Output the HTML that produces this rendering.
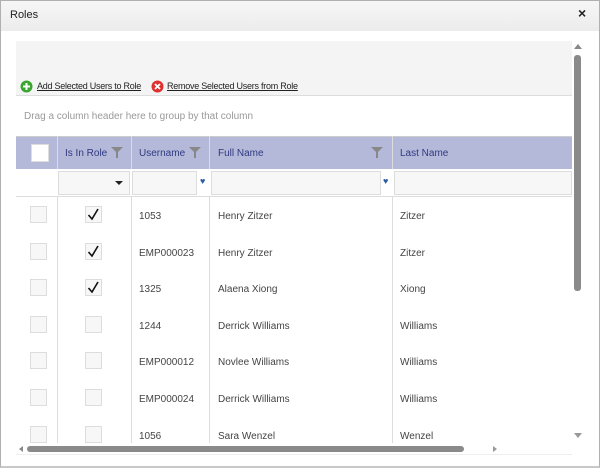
<!DOCTYPE html>
<html><head><style>
*{margin:0;padding:0;box-sizing:border-box}
body{width:600px;height:468px;overflow:hidden;background:#fff;font-family:"Liberation Sans",sans-serif;position:relative}
.a{position:absolute}
.cb{position:absolute;width:17px;height:17px;border:1px solid #ddd;background:#f7f7f7}
.t{position:absolute;font-size:10px;color:#444}
.vl{position:absolute;width:1px;background:#ddd}
</style></head><body>
<div class="a" style="left:0;top:0;width:600px;height:468px;border:1px solid #b0b0b0;border-bottom:2px solid #c8c8c8"></div>
<div class="a" style="left:1px;top:1px;width:598px;height:30px;background:linear-gradient(#f6f6f6,#ececec)"></div>
<div class="t" style="left:10px;top:9px;font-size:11px;color:#222">Roles</div>
<div class="a" style="left:578px;top:5px;font-size:14px;font-weight:bold;color:#222">×</div>

<div class="a" style="left:16px;top:41px;width:556px;height:55px;background:#f4f4f4;border-bottom:1px solid #ddd"></div>
<svg class="a" style="left:20px;top:80px" width="13" height="13"><circle cx="6.5" cy="6.5" r="6" fill="#3aa52f"/><path d="M6.5 3v7M3 6.5h7" stroke="#fff" stroke-width="2"/></svg>
<div class="t" style="left:37px;top:81px;font-size:9px;letter-spacing:-0.25px;text-decoration:underline;color:#222">Add Selected Users to Role</div>
<svg class="a" style="left:151px;top:80px" width="13" height="13"><circle cx="6.5" cy="6.5" r="6" fill="#e03030"/><path d="M4 4l5 5M9 4l-5 5" stroke="#fff" stroke-width="1.8"/></svg>
<div class="t" style="left:167px;top:81px;font-size:9px;letter-spacing:-0.25px;text-decoration:underline;color:#222">Remove Selected Users from Role</div>
<div class="t" style="left:24px;top:111px;color:#999">Drag a column header here to group by that column</div>

<div class="a" style="left:16px;top:136px;width:556px;height:33px;background:#b4b8d9;border-top:1px solid #ccc"></div>
<div class="cb" style="left:31px;top:144px;background:#fff;width:18px;height:18px"></div>
<div class="vl" style="left:57px;top:136px;height:307px"></div>
<div class="vl" style="left:131px;top:136px;height:307px"></div>
<div class="vl" style="left:209px;top:136px;height:307px"></div>
<div class="vl" style="left:392px;top:136px;height:307px"></div>
<div class="t" style="left:65px;top:148px;color:#2f3a80">Is In Role</div>
<div class="t" style="left:139px;top:148px;color:#2f3a80">Username</div>
<div class="t" style="left:218px;top:148px;color:#2f3a80">Full Name</div>
<div class="t" style="left:400px;top:148px;color:#2f3a80">Last Name</div>
<svg class="a" style="left:111px;top:147px" width="12" height="12"><path d="M0 0h12L7 5v6H5V5z" fill="#888"/></svg>
<svg class="a" style="left:189px;top:147px" width="12" height="12"><path d="M0 0h12L7 5v6H5V5z" fill="#888"/></svg>
<svg class="a" style="left:371px;top:147px" width="12" height="12"><path d="M0 0h12L7 5v6H5V5z" fill="#888"/></svg>

<div class="a" style="left:16px;top:169px;width:556px;height:28px;background:#fff;border-bottom:1px solid #ddd"></div>
<div class="a" style="left:58px;top:171px;width:72px;height:24px;border:1px solid #ddd;background:#f7f7f7"></div>
<div class="a" style="left:115px;top:181px;border-left:4px solid transparent;border-right:4px solid transparent;border-top:4px solid #222"></div>
<div class="a" style="left:132px;top:171px;width:65px;height:24px;border:1px solid #ddd;background:#f7f7f7"></div>
<div class="a" style="left:211px;top:171px;width:170px;height:24px;border:1px solid #ddd;background:#f7f7f7"></div>
<div class="a" style="left:394px;top:171px;width:178px;height:24px;border:1px solid #ddd;background:#f7f7f7"></div>
<div class="a" style="left:200px;top:176px;font-size:9px;color:#2a5aa0">♥</div>
<div class="a" style="left:383px;top:176px;font-size:9px;color:#2a5aa0">♥</div>

<div class="a" style="left:16px;top:197px;width:556px;height:246px;overflow:hidden">
<div id="rows"></div>
</div>
<script>
var d=[["1053","Henry Zitzer","Zitzer",1],["EMP000023","Henry Zitzer","Zitzer",1],["1325","Alaena Xiong","Xiong",1],["1244","Derrick Williams","Williams",0],["EMP000012","Novlee Williams","Williams",0],["EMP000024","Derrick Williams","Williams",0],["1056","Sara Wenzel","Wenzel",0]];
var h="";d.forEach(function(r,i){var y=i*36.6+9;
h+='<div class="cb" style="left:14px;top:'+y+'px"></div><div class="cb" style="left:69px;top:'+y+'px">'+(r[3]?'<svg width="17" height="17" style="position:absolute;left:-1px;top:-1px"><path d="M3.5 9l3.5 4L13 3" stroke="#111" stroke-width="1.6" fill="none"/></svg>':'')+'</div>';
h+='<div class="t" style="left:123px;top:'+(y+5)+'px">'+r[0]+'</div><div class="t" style="left:202px;top:'+(y+5)+'px">'+r[1]+'</div><div class="t" style="left:384px;top:'+(y+5)+'px">'+r[2]+'</div>';});
document.getElementById("rows").innerHTML=h;
</script>

<div class="a" style="left:572px;top:41px;width:12px;height:414px;background:#fff"></div>
<div class="a" style="left:574px;top:44px;border-left:4px solid transparent;border-right:4px solid transparent;border-bottom:5px solid #888"></div>
<div class="a" style="left:574px;top:55px;width:7px;height:236px;background:#8a8a8a;border-radius:3px"></div>
<div class="a" style="left:574px;top:433px;border-left:4px solid transparent;border-right:4px solid transparent;border-top:5px solid #999"></div>
<div class="a" style="left:16px;top:443px;width:556px;height:12px;background:#fff;border-bottom:1px solid #eee"></div>
<div class="a" style="left:19px;top:446px;border-top:3px solid transparent;border-bottom:3px solid transparent;border-right:4px solid #888"></div>
<div class="a" style="left:27px;top:446px;width:437px;height:6px;background:#8a8a8a;border-radius:3px"></div>
<div class="a" style="left:493px;top:446px;border-top:3px solid transparent;border-bottom:3px solid transparent;border-left:4px solid #999"></div>
</body></html>
